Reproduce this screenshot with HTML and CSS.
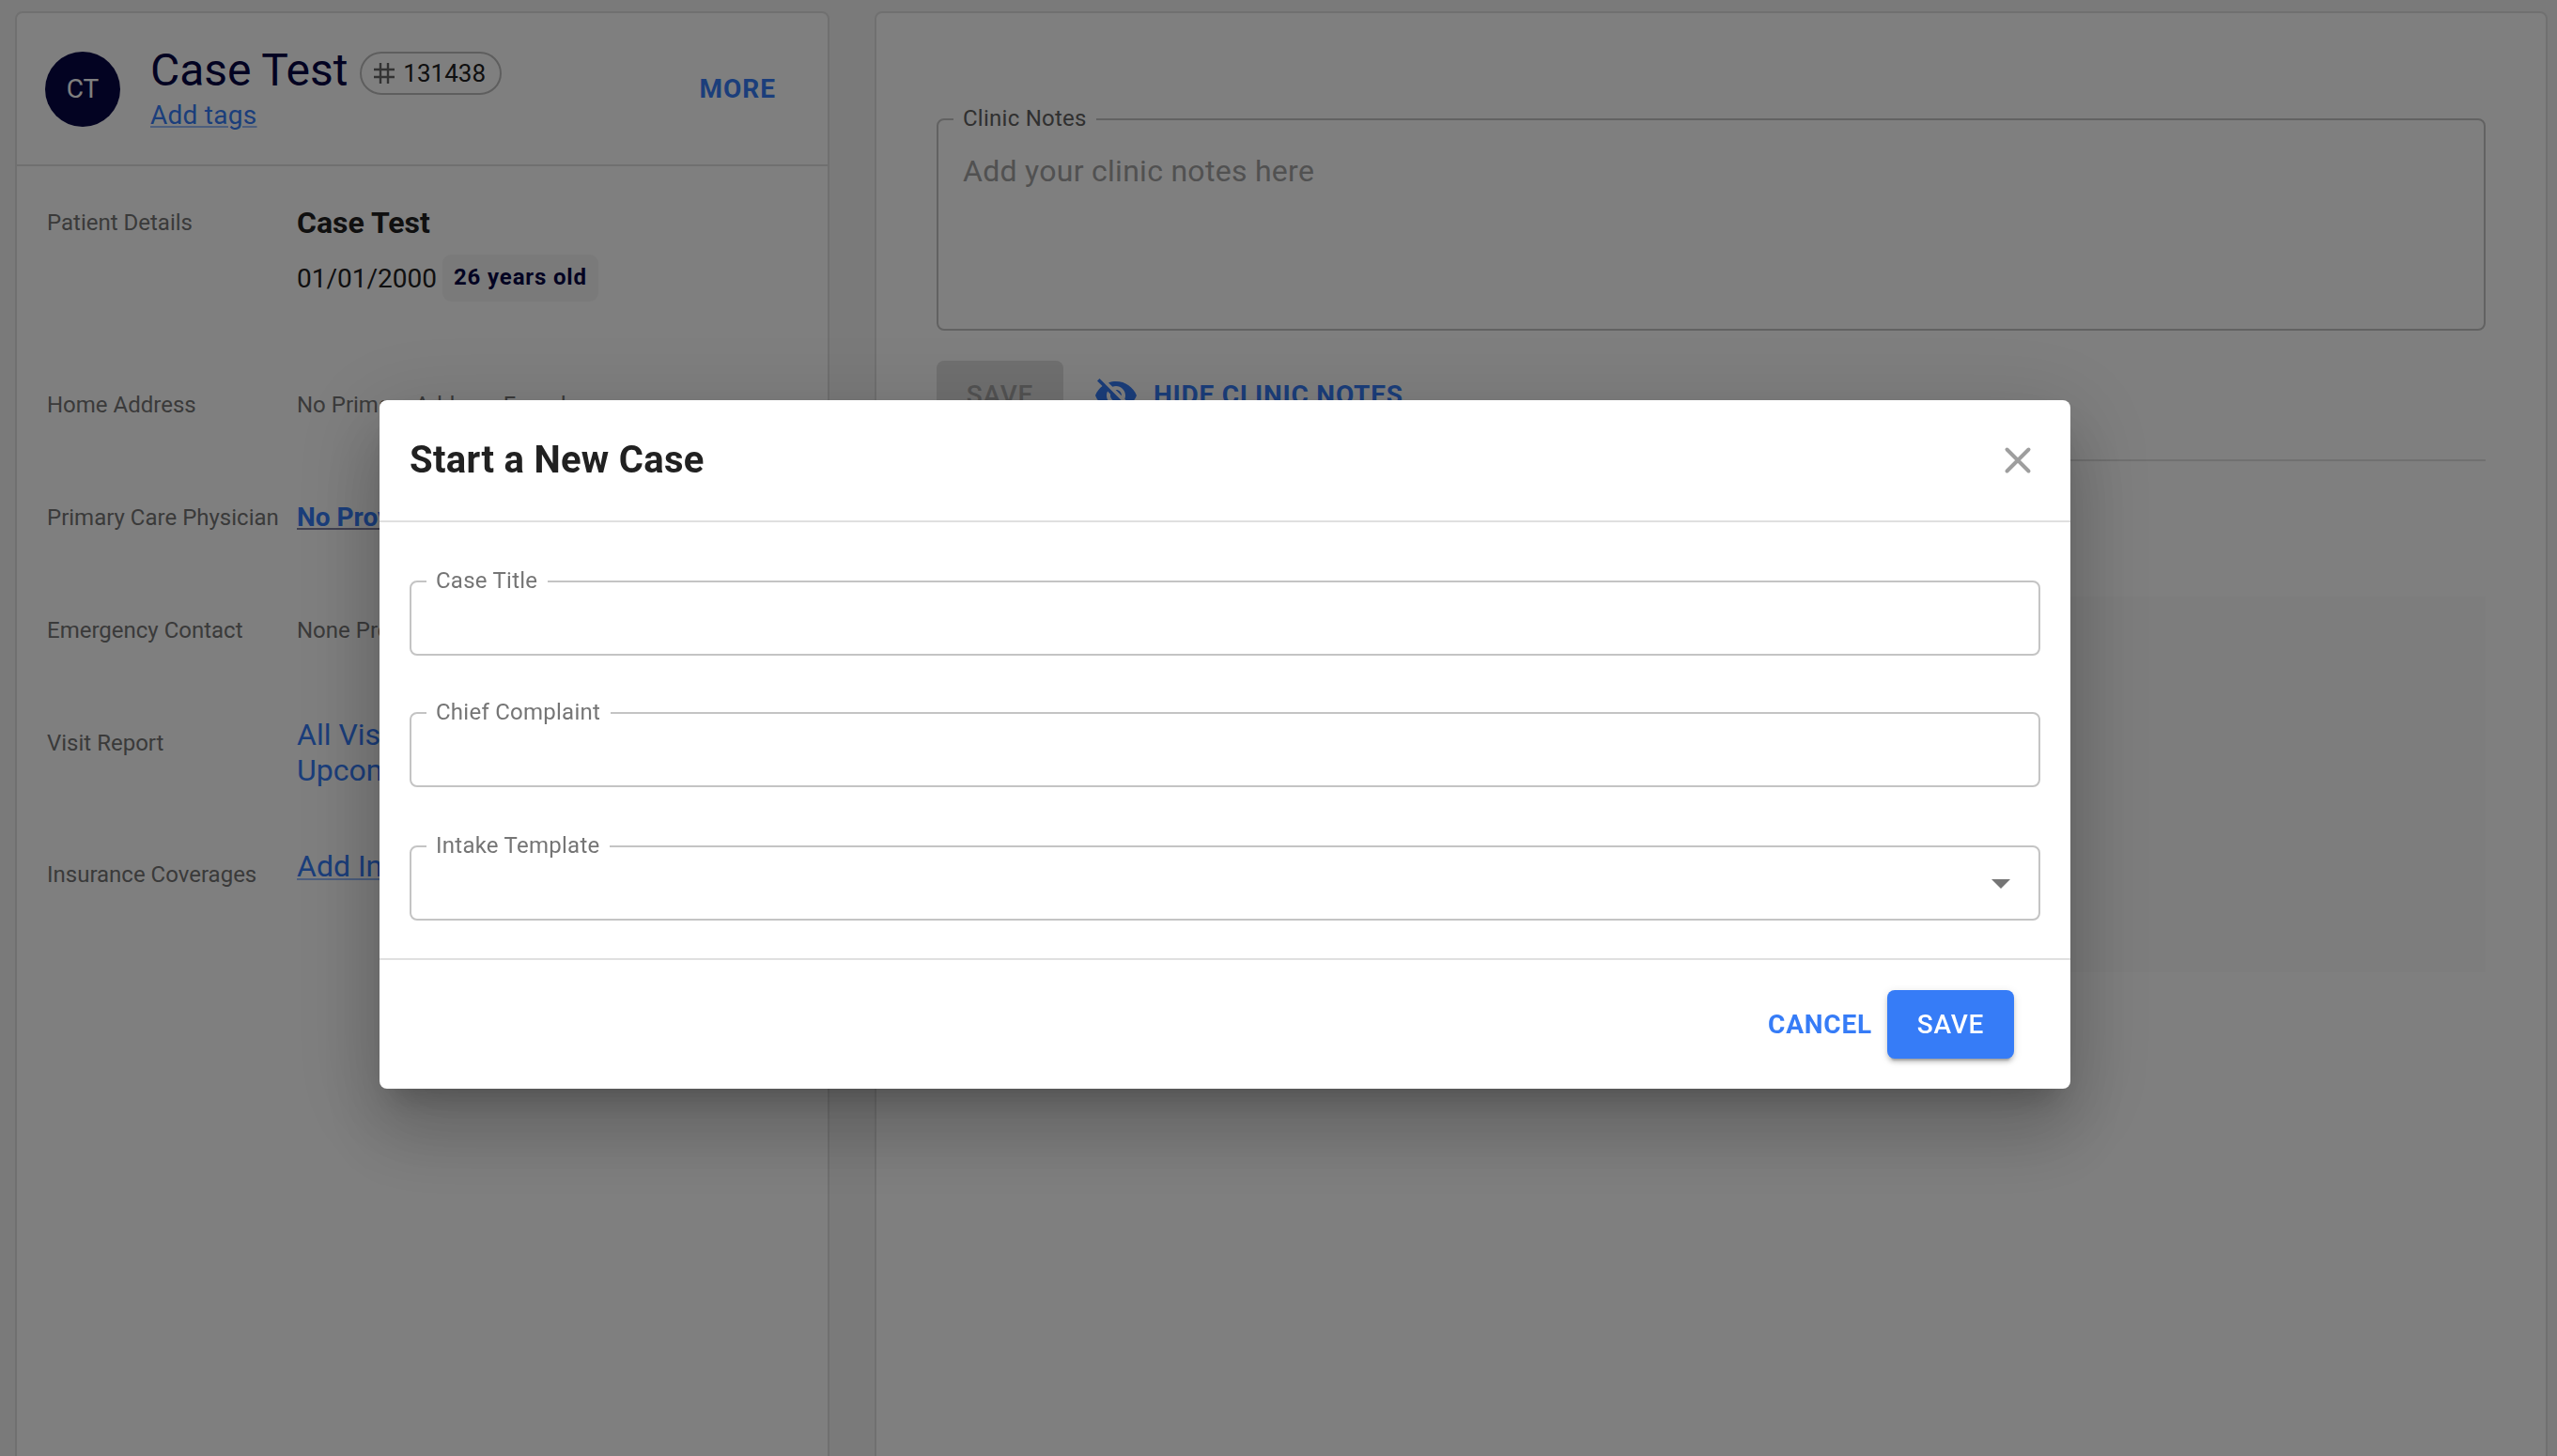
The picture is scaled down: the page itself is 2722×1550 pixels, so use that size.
FILE: index.html
```html
<!DOCTYPE html>
<html lang="en">
<head>
    <meta charset="UTF-8">
    <meta name="viewport" content="width=device-width, initial-scale=1.0">
    <title>Start a New Case</title>
    <link rel="stylesheet" href="styles.css">
</head>

<body>
    <div class="page">
        <div class="card patient">
            <div class="patient-header">
                <div class="avatar">CT</div>
                <div class="patient-id">
                    <div class="name-line">
                        <span class="name">Case Test</span>
                        <span class="chip">
                            <svg width="24" height="24" viewBox="0 0 24 24">
                                <path d="M8 1v22M16 1v22M1 8h22M1 16h22" fill="none" stroke="#666" stroke-width="2.4" />
                            </svg>
                            131438
                        </span>
                    </div>
                    <a class="link tags">Add tags</a>
                </div>
                <span class="btn-text more">MORE</span>
            </div>
            <div class="details">
                <div class="row tall">
                    <span class="label">Patient Details</span>
                    <div class="value person">
                        <div class="person-name">Case Test</div>
                        <div class="birth">
                            <span>01/01/2000</span>
                            <span class="age">26 years old</span>
                        </div>
                    </div>
                </div>
                <div class="row">
                    <span class="label">Home Address</span>
                    <span class="label">No Primary Address Found</span>
                </div>
                <div class="row">
                    <span class="label">Primary Care Physician</span>
                    <div class="value provider"><a class="link">No Provider</a></div>
                </div>
                <div class="row">
                    <span class="label">Emergency Contact</span>
                    <span class="label">None Provided</span>
                </div>
                <div class="row visits">
                    <span class="label">Visit Report</span>
                    <div class="value big">
                        <div>All Visits</div>
                        <div>Upcoming Visits</div>
                    </div>
                </div>
                <div class="row">
                    <span class="label">Insurance Coverages</span>
                    <div class="value big"><a class="link">Add Insurance</a></div>
                </div>
            </div>
        </div>

        <div class="card notes">
            <fieldset class="field notes-field">
                <legend>Clinic Notes</legend>
                <p class="placeholder">Add your clinic notes here</p>
            </fieldset>
            <div class="notes-actions">
                <span class="btn disabled">SAVE</span>
                <span class="btn-text hide-notes">
                    <svg width="48" height="48" viewBox="0 0 24 24" fill="currentColor">
                        <path d="M12 7c2.76 0 5 2.24 5 5 0 .65-.13 1.26-.36 1.83l2.92 2.92c1.51-1.26 2.7-2.89 3.43-4.75-1.73-4.39-6-7.5-11-7.5-1.4 0-2.74.25-3.98.7l2.16 2.16C10.74 7.13 11.35 7 12 7zM2 4.27l2.28 2.28.46.46C3.08 8.3 1.78 10.02 1 12c1.73 4.39 6 7.5 11 7.5 1.55 0 3.03-.3 4.38-.84l.42.42L19.73 22 21 20.73 3.27 3 2 4.27zM7.53 9.8l1.55 1.55c-.05.21-.08.43-.08.65 0 1.66 1.34 3 3 3 .22 0 .44-.03.65-.08l1.55 1.55c-.67.33-1.41.53-2.2.53-2.76 0-5-2.24-5-5 0-.79.2-1.53.53-2.2zm4.31-.78l3.15 3.15.02-.16c0-1.66-1.34-3-3-3l-.17.01z" />
                    </svg>
                    HIDE CLINIC NOTES
                </span>
            </div>
            <div class="empty-box"></div>
        </div>
    </div>

    <div class="backdrop">
        <div class="modal">
            <div class="modal-header">
                <h2>Start a New Case</h2>
                <svg width="32" height="32" viewBox="0 0 32 32">
                    <path d="M4.5 4.5l23 23M27.5 4.5l-23 23" fill="none" stroke="#9e9e9e" stroke-width="4" stroke-linecap="round" />
                </svg>
            </div>
            <div class="modal-body">
                <fieldset class="field">
                    <legend>Case Title</legend>
                </fieldset>
                <fieldset class="field">
                    <legend>Chief Complaint</legend>
                </fieldset>
                <fieldset class="field select">
                    <legend>Intake Template</legend>
                    <div class="arrow"></div>
                </fieldset>
            </div>
            <div class="modal-footer">
                <span class="btn-text">CANCEL</span>
                <span class="btn primary">SAVE</span>
            </div>
        </div>
    </div>
</body>

</html>
```
FILE: styles.css
```css
* {
    box-sizing: border-box;
}

body {
    margin: 0;
    height: 100vh;
    overflow: hidden;
    background-color: #f4f4f4;
    font-family: Roboto, "Liberation Sans", sans-serif;
    color: #212121;
}

.page {
    display: flex;
    gap: 48px;
    padding: 12px 10px 0 16px;
}

.card {
    height: 1600px;
    background-color: #fff;
    border: 2px solid #e0e0e0;
    border-radius: 8px;
}

.link {
    color: #367cf7;
    text-decoration: underline;
    text-decoration-color: rgba(54, 124, 247, .5);
    text-decoration-thickness: 2px;
    text-underline-offset: 2px;
}

/* patient card */
.patient {
    width: 867px;
    flex: none;
}

.patient-header {
    display: flex;
    align-items: center;
    height: 163px;
    padding: 0 55px 0 30px;
    border-bottom: 2px solid #e0e0e0;
}

.avatar {
    width: 80px;
    height: 80px;
    line-height: 80px;
    border-radius: 50%;
    background-color: #060644;
    color: #fff;
    font-size: 28px;
    text-align: center;
}

.patient-id {
    margin-left: 32px;
    padding-bottom: 3px;
}

.name-line {
    display: flex;
    align-items: center;
    gap: 13px;
    height: 56px;
    margin-bottom: 4px;
}

.name {
    font-size: 48px;
    line-height: 56px;
    letter-spacing: -.05px;
    color: #060644;
}

.chip {
    display: flex;
    align-items: center;
    gap: 8px;
    width: 151px;
    height: 46px;
    margin-top: 6px;
    padding-left: 12px;
    border: 2px solid #bdbdbd;
    border-radius: 23px;
    font-size: 26px;
}

.tags {
    display: block;
    font-size: 28px;
    line-height: 32px;
    letter-spacing: .27px;
}

.btn-text {
    color: #367cf7;
    font-size: 28px;
    font-weight: 700;
    letter-spacing: .8px;
}

.more {
    margin-left: auto;
    letter-spacing: 1px;
}

.details {
    padding: 26px 0 0 32px;
}

.row {
    display: grid;
    grid-template-columns: 266px 1fr;
    height: 120px;
}

.row.tall {
    height: 194px;
}

.row.visits {
    height: 140px;
}

.label {
    padding-top: 20px;
    color: #757575;
    font-size: 24px;
    line-height: 28px;
}

.person {
    padding-top: 15px;
}

.person-name {
    font-size: 32px;
    font-weight: 700;
    line-height: 38px;
}

.birth {
    display: flex;
    align-items: center;
    gap: 6px;
    margin-top: 15px;
    font-size: 28px;
}

.age {
    height: 50px;
    line-height: 48px;
    padding: 0 12px;
    border-radius: 9px;
    background-color: #f5f5f5;
    color: #060644;
    font-size: 24px;
    font-weight: 700;
    letter-spacing: .85px;
}

.provider {
    padding-top: 18px;
    font-size: 28px;
    font-weight: 700;
    line-height: 32px;
}

.provider .link {
    text-decoration-color: rgba(6, 6, 68, .5);
}

.big {
    padding-top: 6px;
    color: #367cf7;
    font-size: 32px;
    line-height: 38px;
}

/* outlined inputs */
.field {
    min-width: 0;
    height: 94px;
    margin: 0;
    padding: 0 16px;
    border: 2px solid #c4c4c4;
    border-radius: 8px;
}

.field legend {
    height: 30px;
    padding: 0 11px 0 10px;
    color: #757575;
    font-size: 24px;
    line-height: 28px;
    letter-spacing: .25px;
}

/* clinic notes card */
.notes {
    flex: 1;
    padding: 98px 64px 0;
}

.notes-field {
    height: 240px;
}

.notes-field legend {
    padding-right: 10px;
    color: #616161;
}

.placeholder {
    margin: 0;
    padding: 21px 10px 0;
    color: #a2a2a2;
    font-size: 32px;
    line-height: 38px;
    letter-spacing: .28px;
}

.notes-actions {
    display: flex;
    align-items: center;
    gap: 32px;
    height: 139px;
    border-bottom: 2px solid #e0e0e0;
}

.btn {
    width: 135px;
    height: 73px;
    line-height: 73px;
    border-radius: 8px;
    font-size: 28px;
    font-weight: 500;
    letter-spacing: .8px;
    text-align: center;
}

.disabled {
    background-color: #e0e0e0;
    color: #a6a6a6;
}

.hide-notes {
    display: flex;
    align-items: center;
    gap: 16px;
}

.empty-box {
    height: 400px;
    margin-top: 144px;
    background-color: #fafafa;
}

/* dialog */
.backdrop {
    position: fixed;
    inset: 0;
    padding: 426px 0 0 404px;
    background-color: rgba(0, 0, 0, .5);
}

.modal {
    width: 1800px;
    height: 733px;
    background-color: #fff;
    border-radius: 8px;
    box-shadow: 0 22px 30px -14px rgba(0, 0, 0, .2), 0 48px 76px 6px rgba(0, 0, 0, .14), 0 18px 92px 16px rgba(0, 0, 0, .12);
}

.modal-header {
    display: flex;
    align-items: center;
    justify-content: space-between;
    height: 130px;
    padding: 0 40px 0 32px;
    border-bottom: 2px solid #e0e0e0;
}

.modal-header h2 {
    margin: 0;
    padding-bottom: 2px;
    font-size: 40px;
    font-weight: 700;
    letter-spacing: .3px;
}

.modal-body {
    display: flex;
    flex-direction: column;
    gap: 46px;
    height: 466px;
    padding: 48px 32px 0;
    border-bottom: 2px solid #e0e0e0;
}

.select {
    margin-top: 2px;
}

.arrow {
    width: 20px;
    height: 10px;
    margin: 20px 14px 0 auto;
    background-color: #757575;
    clip-path: polygon(0 0, 100% 0, 50% 100%);
}

.modal-footer {
    display: flex;
    align-items: center;
    justify-content: flex-end;
    gap: 16px;
    height: 137px;
    padding-right: 60px;
}

.primary {
    background-color: #367cf7;
    color: #fff;
    box-shadow: 0 6px 2px -4px rgba(0, 0, 0, .2), 0 4px 4px rgba(0, 0, 0, .14), 0 2px 10px rgba(0, 0, 0, .12);
}
```
